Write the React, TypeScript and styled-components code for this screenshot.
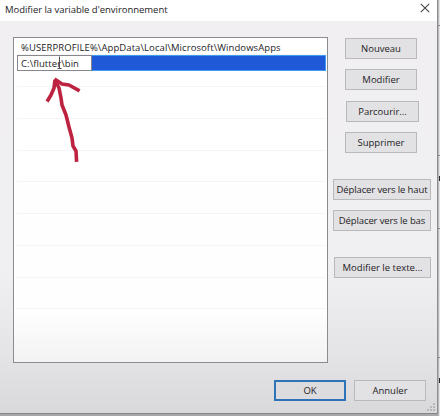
import React from "react";
import styled, { createGlobalStyle } from "styled-components";

const GlobalStyle = createGlobalStyle`
  *, *::before, *::after { box-sizing: border-box; }
  body { margin: 0; overflow: hidden; background: #e9e8ea; }
`;

const Screen = styled.div`
  display: flex;
  width: 440px;
  height: 416px;
  background: #a8a6a9;
  font-family: "Open Sans", "Noto Sans", sans-serif;
  font-size: 9.5px;
  color: #242326;
`;

const Dialog = styled.main`
  width: 438px;
  height: 414px;
  display: flex;
  flex-direction: column;
  border-right: 1px solid #8e8d90;
  border-bottom: 1px solid #858386;
  background: linear-gradient(#f1eff2 0, #f0eff2 270px, #e5e4e6 350px, #d9d8da 413px);
`;

const Backdrop = styled.div`
  width: 2px;
  height: 416px;
  background: linear-gradient(90deg, #b9b8bb 1px, #e4e3e5 1px);
`;

const TitleBar = styled.header`
  height: 21px;
  flex: none;
  display: flex;
  justify-content: space-between;
  align-items: flex-start;
  padding: 3px 7px 0 5px;
  background: #fff;
  line-height: 14px;
`;

const Title = styled.span`
  letter-spacing: -0.03px;
  white-space: pre;
`;

const CloseIcon = styled.svg`
  width: 10px;
  height: 10px;
`;

const Content = styled.div`
  display: flex;
  justify-content: space-between;
  height: 342px;
  padding: 16px 6px 0 13px;
`;

const List = styled.div`
  width: 315px;
  height: 326px;
  border: 1px solid #8c8b90;
  background: linear-gradient(#fff 0, #fefefe 275px, #f2f2f3 326px);
  padding: 2px 1px 0 3px;
`;

const Row = styled.div<{ $h?: number }>`
  height: ${(p) => p.$h ?? 15}px;
  border-bottom: 1px solid #f5f4f6;
  padding-left: 4px;
  line-height: 15px;
  white-space: pre;
`;

const PathText = styled.span`
  letter-spacing: 0.085px;
`;

const SelectedRow = styled.div`
  height: 16px;
  display: flex;
  background: #2059d7;
  border: 1px solid #419ced;
  border-left: 0;
`;

const Editor = styled.div`
  position: relative;
  width: 75px;
  height: 16px;
  margin-top: -1px;
  background: #fff;
  border: 1px solid #87868b;
  padding-left: 3px;
  line-height: 16px;
  letter-spacing: 0.08px;
  white-space: pre;
`;

const TextCursor = styled.svg`
  position: absolute;
  left: 38px;
  top: 0;
  width: 7px;
  height: 13px;
`;

const Actions = styled.div`
  width: 98px;
  display: flex;
  flex-direction: column;
`;

const Button = styled.button<{ $w?: number; $ml?: number; $mt?: number; $ls?: number; $primary?: boolean }>`
  width: ${(p) => p.$w ?? 72}px;
  height: 21px;
  flex: none;
  margin: ${(p) => p.$mt ?? 0}px 0 0 ${(p) => p.$ml ?? 0}px;
  padding: 0;
  border: ${(p) => (p.$primary ? "2px solid #2c73b8" : "1px solid #b9b8bb")};
  background: ${(p) => (p.$primary ? "#dcdcdf" : "#e2e1e4")};
  color: #242326;
  font: inherit;
  line-height: 15px;
  letter-spacing: ${(p) => p.$ls ?? 0}px;
  white-space: nowrap;
`;

const Footer = styled.footer`
  position: relative;
  display: flex;
  justify-content: flex-end;
  gap: 8px;
  padding: 17px 11px 0 0;
  flex: 1;
`;

const Grip = styled.svg`
  position: absolute;
  right: 2px;
  bottom: 2px;
  width: 8px;
  height: 8px;
`;

const Annotation = styled.svg`
  position: absolute;
  left: 40px;
  top: 74px;
  width: 50px;
  height: 94px;
  pointer-events: none;
`;

const EdgeMarks = styled.svg`
  position: absolute;
  left: 438px;
  top: 0;
  width: 2px;
  height: 416px;
`;

export default function App() {
  return (
    <Screen>
      <GlobalStyle />
      <Dialog>
        <TitleBar>
          <Title>Modifier la variable d'environnement</Title>
          <CloseIcon viewBox="0 0 10 10" fill="none" stroke="#454447" strokeWidth="1.1">
            <path d="M.8.8 9.2 9.2M9.2.8.8 9.2" />
          </CloseIcon>
        </TitleBar>
        <Content>
          <List>
            <Row><PathText>%USERPROFILE%\AppData\Local\Microsoft\WindowsApps</PathText></Row>
            <SelectedRow>
              <Editor>
                C:\flutter\bin
                <TextCursor viewBox="0 0 7 13" fill="none" stroke="#4b4a4e">
                  <path d="M3.5.5V12.5M1.5 12.5H5.5" />
                </TextCursor>
              </Editor>
            </SelectedRow>
            <Row $h={16} />
            {Array.from({ length: 8 }, (_, i) => <Row key={i} $h={31.75} />)}
          </List>
          <Actions>
            <Button $ml={12} $mt={1}>Nouveau</Button>
            <Button $ml={12} $mt={10}>Modifier</Button>
            <Button $ml={13} $mt={11} $w={73}>Parcourir...</Button>
            <Button $ml={12} $mt={10}>Supprimer</Button>
            <Button $w={98} $mt={26} $ls={-0.12}>Déplacer vers le haut</Button>
            <Button $w={98} $mt={10} $ls={-0.12}>Déplacer vers le bas</Button>
            <Button $w={97} $ml={1} $mt={26}>Modifier le texte...</Button>
          </Actions>
        </Content>
        <Footer>
          <Button $primary>OK</Button>
          <Button>Annuler</Button>
          <Grip viewBox="0 0 8 8" fill="#b7b6b9">
            <path d="M6 0h2v2H6zM3 3h2v2H3zM6 3h2v2H6zM0 6h2v2H0zM3 6h2v2H3zM6 6h2v2H6z" />
          </Grip>
        </Footer>
      </Dialog>
      <Backdrop />
      <EdgeMarks viewBox="0 0 2 416">
        <path fill="#88878a" d="M0 25h2v1H0zM0 155h2v1H0zM0 228h2v1H0zM0 357h2v1H0z" />
        <path fill="#29282b" d="M1 176h1v5H1zM1 378h1v5H1z" />
      </EdgeMarks>
      <Annotation viewBox="40 74 50 94" fill="none" stroke="#bd2340" strokeWidth="3.6" strokeLinecap="square" strokeLinejoin="bevel">
        <path d="M48 100 L51 95 54 88 55 80 59 88 61 98 62 105 66 115 69 127 72 138 73 146 76 151 76.5 160" />
        <path d="M56 80 L62 84 69 85 78 90" />
      </Annotation>
    </Screen>
  );
}
